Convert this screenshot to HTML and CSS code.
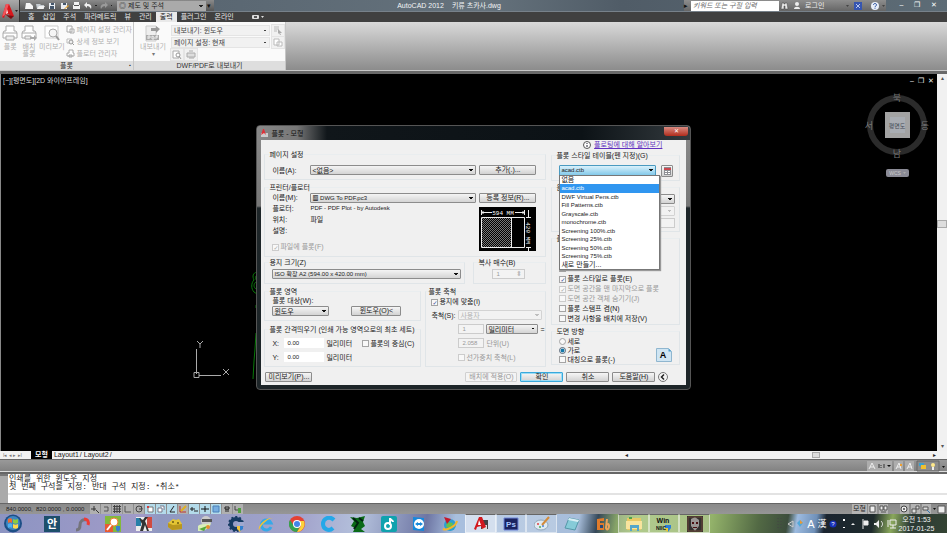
FILE: index.html
```html
<!DOCTYPE html>
<html lang="ko">
<head>
<meta charset="utf-8">
<title>AutoCAD 2012 키류 츠카사.dwg</title>
<link rel="stylesheet" href="styles.css">
</head>
<body>
<div class="app">
  <header class="top">
    <button class="app-button" aria-label="응용프로그램 메뉴">
      <svg width="20" height="21" viewBox="0 0 20 21"><path d="M2 16 6 3h3l5 12-4 1-1-3-4 1-1 3z" fill="#d8161b"/><path d="m6 3 3 0-4 11-3 2z" fill="#f0545a"/><path d="m7 8 1 4-2 1z" fill="#fff"/><path d="m6 14 8 1-3 3z" fill="#7c0d10"/><path d="M15 9h3l-1.500 2z" fill="#222"/></svg>
    </button>
    <div class="top-rows">
      <div class="titlebar">
        <div class="quick">
          <svg width="92" height="12" viewBox="0 0 92 12"><path d="M6 3h4l3 3v3H5z" fill="#f6f6f6"/><path d="M16 4h4l1 1h3v4h-7z" fill="#c5cbd0"/><path d="m17 9 2-3h6l-2 3z" fill="#f2f2f2"/><path d="M29 3h6v6h-6z" fill="#e9edf2"/><path d="M31 3h3v2h-3zM30 6h4v3h-4z" fill="#44566b"/><path d="M41 3h6v6h-6z" fill="#e9edf2"/><path d="M43 3h3v2h-3z" fill="#44566b"/><path d="m44 9 4-4 1 1-4 3z" fill="#e0a030"/><path d="M54 2h5v3h1v4h-7V5h1z" fill="#f2f2f2"/><path d="M54 5h5v1h-5z" fill="#555"/><path d="m64 5 3-3v2c4 0 5 2 4 5-1-2-2-3-4-3v2z" fill="#f0f0f0"/><path d="M75 5h2v1h-2zM91 5h1v1h-1z" fill="#222"/><path d="m88 5-3-3v2c-4 0-5 2-4 5 1-2 2-3 4-3v2z" fill="#9a9a9a"/></svg>
          <select class="workspace" aria-label="작업공간"><option>◎ 제도 및 주석</option></select>
          <span class="quick-more">▾</span>
        </div>
        <h1 class="title"><span>AutoCAD 2012</span><span>키류 츠카사.dwg</span></h1>
        <div class="info">
          <span class="info-arrow">▸</span>
          <input class="search" placeholder="키워드 또는 구절 입력" aria-label="검색">
          <svg width="24" height="12" viewBox="0 0 24 12"><path d="M3 3h2v1h1V3h2l1 6H6V6H5v3H2z" fill="#e6e6e6" stroke="#444" stroke-width=".5"/><circle cx="18" cy="4" r="2" fill="#eee"/><path d="M15 9c0-3 6-3 6 0z" fill="#eee"/></svg>
          <button class="login">로그인</button>
          <svg width="44" height="12" viewBox="0 0 44 12"><path d="M4 5h3L5.500 7zM40 5h3l-1.500 2z" fill="#444"/><path d="M12 2h8v8h-8z" fill="#3655b0"/><path d="m14 4 4 4m0-4-4 4" stroke="#b9c8f0"/><circle cx="33" cy="6" r="4" fill="#e9eef8"/><path d="M31.500 5c0-2 3-2 3 0 0 1-1.500 1-1.500 2m0 .7v1" fill="none" stroke="#224a9c"/></svg>
        </div>
        <div class="window-buttons"><button>‒</button><button>❐</button><button>✕</button></div>
      </div>
      <nav class="tabs">
        <a href="#">홈</a><a href="#">삽입</a><a href="#">주석</a><a href="#">파라메트릭</a><a href="#">뷰</a><a href="#">관리</a><a href="#" class="active">출력</a><a href="#">플러그인</a><a href="#">온라인</a>
        <svg class="tab-extra" width="13" height="6" viewBox="0 0 13 6"><rect width="7" height="4" y="1" rx="1" fill="#ddd"/><path d="M2 2h3v2H2z" fill="#555"/><path d="M9 2h3l-1.500 2z" fill="#ddd"/></svg>
      </nav>
    </div>
  </header>

  <section class="ribbon">
    <div class="panel panel-plot">
      <div class="panel-body">
        <button class="big"><svg width="18" height="17" viewBox="0 0 18 17"><path d="M5 1h8v5h2l1 2v5H2V8l1-2h2z" fill="#fff" stroke="#aaa"/><path d="M2 8h14M5 11h8v4H5z" fill="#eee" stroke="#aaa"/></svg>플롯</button>
        <button class="big"><svg width="18" height="17" viewBox="0 0 18 17"><path d="M5 1h8v5h2l1 2v5H2V8l1-2h2z" fill="#fff" stroke="#aaa"/><path d="M2 8h14M5 11h6v3H5z" fill="#eee" stroke="#aaa"/><path d="M10 12h4v-2l3 3-3 3v-2h-4z" fill="#aaa"/></svg>배치<br>플롯</button>
        <button class="big wide"><svg width="18" height="17" viewBox="0 0 18 17"><path d="M2 1h13v12H2z" fill="#fff" stroke="#ccc"/><circle cx="10" cy="8" r="4" fill="#f5f5f5" stroke="#aaa"/><path d="m13 11 3 4" stroke="#999" stroke-width="2"/></svg>미리보기</button>
        <div class="tools">
          <button><svg width="9" height="9" viewBox="0 0 9 9"><path d="M1 1h5v6H1zM4 4h4v4H4z" fill="#fff" stroke="#aaa"/></svg>페이지 설정 관리자</button>
          <button><svg width="9" height="9" viewBox="0 0 9 9"><path d="M1 2h5v4H1z" fill="#fff" stroke="#bbb"/><circle cx="5" cy="5" r="2" fill="#eee" stroke="#999"/><path d="m6 6 2 2" stroke="#999"/></svg>상세 정보 보기</button>
          <button><svg width="9" height="9" viewBox="0 0 9 9"><path d="M3 1h4v3h1v3H1V4h2zM3 6h3v2H3z" fill="#fff" stroke="#aaa"/></svg>플로터 관리자</button>
        </div>
      </div>
      <h2>플롯<i>▪</i></h2>
    </div>
    <div class="panel panel-export">
      <div class="panel-body">
        <button class="big export"><svg width="18" height="17" viewBox="0 0 18 17"><path d="M2 1h10v15H2z" fill="#eee" stroke="#ccc"/><path d="M7 3h5V1l4 3-4 4V6H7z" fill="#999"/><path d="M2 10h13v5H2z" fill="#aaa"/><path d="M4 14v-3h2v2H4m4 1v-3l2 1v2H8m4 0v-3h2m-2 1h2" fill="none" stroke="#eee"/></svg>내보내기<br><small>▾</small></button>
        <div class="export-fields">
          <div><select aria-label="내보내기"><option>내보내기: 윈도우</option></select><svg width="12" height="11" viewBox="0 0 12 11"><path d="M2 2h5M2 4h5M2 6h3" stroke="#bbb"/><path d="m6 4 4 4-2 0 1 2-1 0-1-2-1 1z" fill="#aaa"/></svg></div>
          <div><select aria-label="페이지 설정"><option>페이지 설정: 현재</option></select><svg width="12" height="11" viewBox="0 0 12 11"><path d="M2 2h5v6H2zM5 5h5v4H5z" fill="#fff" stroke="#bbb"/></svg></div>
          <div class="minis"><svg width="12" height="11" viewBox="0 0 12 11"><path d="M2 2h6v7H2z" fill="#fff" stroke="#aaa"/><circle cx="7" cy="6" r="2" fill="#fff" stroke="#999"/><path d="m8 7 2 3" stroke="#999"/></svg><svg width="12" height="11" viewBox="0 0 12 11"><path d="M2 4h8v4H2zM4 2h4M4 9h5" fill="#ddd" stroke="#aaa"/></svg></div>
        </div>
      </div>
      <h2>DWF/PDF로 내보내기</h2>
    </div>
  </section>

  <main class="workspace-area">
    <div class="drawing">
      <p class="view-label">[−][평면도][2D 와이어프레임]</p>
      <div class="doc-buttons"><button aria-label="최소화">‒</button><button aria-label="복원">❐</button><button aria-label="닫기">✕</button></div>
      <svg class="compass" width="70" height="110" viewBox="0 0 70 110">
        <circle cx="33" cy="33" r="27" fill="none" stroke="#2b2b2b" stroke-width="6"/>
        <path d="M21 20h25v26H21z" fill="#a3a3a3"/><path d="M26 25h15v16H26z" fill="#a9adb3"/>
        <text x="33" y="36" font-size="6" fill="#444b55">평면도</text>
        <text x="33" y="9">북</text><text x="5" y="37">서</text><text x="61" y="37">동</text><text x="33" y="65">남</text>
        <rect x="22" y="77" width="23" height="8" rx="2" fill="#8b8b96"/><text x="31" y="83" font-size="5" fill="#ccc">WCS</text><path d="M39 80h3l-1.500 2z" fill="#aaa"/>
      </svg>
      <svg class="ucs" width="42" height="40" viewBox="0 0 42 40" fill="none" stroke="#aaa"><path d="M4.500 9v25M7 35.500h22M2 32.500h5v5H2zM5 1l3 3 3-3M8 4v4M31 29l6 6m0-6-6 6"/></svg>
      <svg class="trace" width="8" height="112" viewBox="0 0 8 112" fill="none" stroke="#087808"><path d="M7 1C3 2 2 5 4 9c-3 3-3 9 0 12l3 2M7 4c-3 2-1 5 0 6-4 3-4 6 0 9M6 34v3M6 62 5 78 4 90 3 108"/></svg>
    </div>
    <div class="vscroll"><span>▴</span><i></i><span>▾</span></div>

    <section class="dialog" role="dialog" aria-label="플롯 - 모형">
      <header class="dialog-title"><svg width="9" height="8" viewBox="0 0 9 8"><path d="M1 4h7v4H1z" fill="#ccc"/><path d="m1 6 2-6h1l2 6-2-2z" fill="#e03038"/></svg><span>플롯 - 모형</span><button aria-label="닫기">✕</button></header>
      <form class="dialog-body">
        <div class="left">
          <fieldset><legend>페이지 설정</legend>
            <div class="named setup"><label for="ps">이름(A):</label><select id="ps"><option>&lt;없음&gt;</option></select><button type="button">추가(.)...</button></div>
          </fieldset>
          <fieldset><legend>프린터/플로터</legend>
            <div class="named printer">
              <label for="pr">이름(M):</label><select id="pr" class="latin"><option>▩ DWG To PDF.pc3</option></select><button type="button">등록 정보(R)...</button>
              <span>플로터:</span><span class="latin">PDF - PDF Plot - by Autodesk</span>
              <span>위치:</span><span>파일</span>
              <span>설명:</span><span></span>
              <label class="tofile off"><input type="checkbox" checked disabled>파일에 플롯(F)</label>
              <svg class="preview" width="57" height="44" viewBox="0 0 57 44"><defs><pattern id="hatch" width="2" height="2" patternUnits="userSpaceOnUse"><path d="M0 0h1v1H0zM1 1h1v1H1z" fill="#777"/></pattern></defs><path d="M0 0h57v44H0z" fill="#000"/><path d="M3 11h29v29H3z" fill="url(#hatch)"/><path d="M2.500 10.500h43v30h-43zM32.500 11v29M2.500 3v5M45.500 3v5M3 5.500h10M36 5.500h9M4 4v3M44 4v3M47 10.500h5M47 40.500h5M49.500 3v8M49.500 40v4" fill="none" stroke="#eee"/><text x="24" y="8">594 MM</text><text transform="translate(47 26) rotate(90)" x="0" y="0">420 MM</text></svg>
            </div>
          </fieldset>
          <div class="paper">
            <fieldset><legend>용지 크기(Z)</legend><select class="full latin" aria-label="용지 크기"><option>ISO 확장 A2 (594.00 x 420.00 mm)</option></select></fieldset>
            <fieldset class="copies"><legend>복사 매수(B)</legend><span class="spin"><input value="1" disabled aria-label="복사 매수"><i>⬍</i></span></fieldset>
          </div>
          <div class="area-scale">
            <div class="area">
              <fieldset><legend>플롯 영역</legend><label class="line" for="what">플롯 대상(W):</label>
                <div class="what"><select id="what"><option>윈도우</option></select><button type="button">윈도우(O)&lt;</button></div></fieldset>
              <fieldset class="offset"><legend>플롯 간격띄우기 (인쇄 가능 영역으로의 최초 세트)</legend>
                <div class="xy"><label for="ox">X:</label><input id="ox" value="0.00"><span>밀리미터</span><label><input type="checkbox">플롯의 중심(C)</label></div>
                <div class="xy"><label for="oy">Y:</label><input id="oy" value="0.00"><span>밀리미터</span></div></fieldset>
            </div>
            <fieldset class="scale"><legend>플롯 축척</legend>
              <label class="fit"><input type="checkbox" checked>용지에 맞춤(I)</label>
              <div class="scale-row"><label for="sc">축척(S):</label><select id="sc" disabled><option>사용자</option></select></div>
              <div class="scale-row units"><span></span><input value="1" disabled aria-label="용지 단위"><select aria-label="단위"><option>밀리미터</option></select><span>=</span></div>
              <div class="scale-row units"><span></span><input value="2.058" disabled aria-label="도면 단위"><span class="off">단위(U)</span></div>
              <div class="scale-row"><span></span><label class="off"><input type="checkbox" disabled>선가중치 축척(L)</label></div>
            </fieldset>
          </div>
        </div>
        <div class="right">
          <div class="learn"><svg width="8" height="8" viewBox="0 0 8 8"><circle cx="4" cy="4" r="3.500" fill="#fff" stroke="#555"/><path d="M4 2v1M4 4v2" stroke="#223"/></svg><a href="#">플로팅에 대해 알아보기</a></div>
          <fieldset><legend>플롯 스타일 테이블(펜 지정)(G)</legend>
            <div class="table-row">
              <select class="hot latin" aria-label="플롯 스타일 테이블"><option>acad.ctb</option></select>
              <button type="button" aria-label="편집"><svg width="7" height="8" viewBox="0 0 7 8"><path d="M0 0h7v8H0z" fill="#8d8f93"/><path d="M0 1h7v2H0z" fill="#c9474f"/><path d="M1 4h2v1H1zM4 4h2v1H4zM1 6h2v1H1zM4 6h2v1H4z" fill="#fff"/></svg></button>
              <ul class="list" role="listbox"><li class="ko">없음</li><li class="sel">acad.ctb</li><li>DWF Virtual Pens.ctb</li><li>Fill Patterns.ctb</li><li>Grayscale.ctb</li><li>monochrome.ctb</li><li>Screening 100%.ctb</li><li>Screening 25%.ctb</li><li>Screening 50%.ctb</li><li>Screening 75%.ctb</li><li class="ko">새로 만들기...</li></ul>
            </div>
          </fieldset>
          <fieldset class="shade"><legend>음영</legend>
            <select aria-label="음영 플롯"></select><select disabled aria-label="품질"></select><input disabled aria-label="DPI">
          </fieldset>
          <fieldset class="options"><legend>플롯</legend>
            <label><input type="checkbox" aria-label="백그라운드에 플롯">&nbsp;</label>
            <label class="off"><input type="checkbox" disabled aria-label="객체의 선가중치 플롯">&nbsp;</label>
            <label><input type="checkbox" aria-label="플롯 투명도">&nbsp;</label>
            <label><input type="checkbox" checked>플롯 스타일로 플롯(E)</label>
            <label class="off"><input type="checkbox" checked disabled>도면 공간을 맨 마지막으로 플롯</label>
            <label class="off"><input type="checkbox" disabled>도면 공간 객체 숨기기(J)</label>
            <label><input type="checkbox">플롯 스탬프 켬(N)</label>
            <label><input type="checkbox">변경 사항을 배치에 저장(V)</label>
          </fieldset>
          <fieldset class="orient"><legend>도면 방향</legend>
            <div><label><input type="radio" name="o">세로</label><label><input type="radio" name="o" checked>가로</label><label><input type="checkbox">대칭으로 플롯(-)</label></div>
            <svg width="16" height="14" viewBox="0 0 16 14"><path d="M.5.5h12l3 3v10H.5z" fill="#cfe5f3" stroke="#8fb6cf"/><path d="M12.500.5v3h3z" fill="#4fa0cf"/><text x="7" y="10">A</text></svg>
          </fieldset>
        </div>
        <footer class="actions">
          <button type="button" class="pre">미리보기(P)...</button>
          <button type="button" class="apply" disabled>배치에 적용(O)</button>
          <button type="button" class="ok">확인</button><button type="button">취소</button><button type="button">도움말(H)</button>
          <button type="button" class="less" aria-label="축소"><svg width="10" height="10" viewBox="0 0 10 10"><circle cx="5" cy="5" r="4.500" fill="#f4f4f4" stroke="#777"/><path d="M6 2.500 3.500 5 6 7.500" fill="none" stroke="#222" stroke-width="1.500"/></svg></button>
        </footer>
      </form>
    </section>
  </main>

  <div class="layouts">
    <span class="pager">I◂ ◂ ▸ ▸I</span><a href="#" class="current">모형</a><a href="#">Layout1</a><b>/</b><a href="#">Layout2</a><b>/</b>
    <div class="hscroll"><span>◂</span><i></i><span>▸</span></div>
  </div>
  <div class="anno">
    <svg width="80" height="12" viewBox="0 0 80 12"><path d="M0 1h25v10H0zM27 1h9v10h-9zM38 1h9v10h-9z" fill="#adadad"/><path d="M50 1h22v10H50z" fill="#8c8c8c" stroke="#666"/><path d="m2 9 3-6 3 6M3 7h4M29 9l3-6 2 6M30 7h4M40 9l3-6 2 6M41 7h4" fill="none" stroke="#eee"/><path d="M12 4v4M17 4v4M14 5v1M14 7v1" stroke="#333"/><path d="M20 5h4l-2 2zM75 6h3l-1.500 2z" fill="#111"/><path d="M33 4h2v2h-2z" fill="#f0a030"/><path d="M52 3h5v3h-5z" fill="#3aa0d0"/><path d="M54 5h5v4h-5z" fill="#f0c030"/><circle cx="66" cy="5" r="2" fill="#ffe98a"/><path d="M65 7h2v3h-2z" fill="#eee"/></svg>
  </div>
  <section class="command">
    <div class="grip"></div>
    <div class="command-text"><p>인쇄를 위한 윈도우 지정</p><p>첫 번째 구석을 지정: 반대 구석 지정: *취소*</p><input aria-label="명령"></div>
  </section>
  <div class="status">
    <output class="coords">840.0000, &nbsp;820.0000 , 0.0000</output>
    <div class="toggles">
      <button><svg viewBox="0 0 10 10"><path d="M1 5h5M4 2v5M6 6l3 3" stroke="#333"/></svg></button><button><svg viewBox="0 0 10 10"><path d="M3 7h4V3H3" stroke="#555"/></svg></button><button><svg viewBox="0 0 10 10"><path d="M1 2.500h8M1 5h8M1 7.500h8M2.500 1v8M5 1v8M7.500 1v8" stroke="#444"/></svg></button><button><svg viewBox="0 0 10 10"><path d="M2 2v6h6" stroke="#555"/></svg></button><button><svg viewBox="0 0 10 10"><circle cx="5" cy="5" r="3" stroke="#444"/><path d="M5 5h3L7 2" stroke="#444"/></svg></button><button class="on"><svg viewBox="0 0 10 10"><path d="M3 3h5v5H3z" fill="#fff" stroke="#777"/><path d="M2 2h2v2H2z" fill="#d04040"/></svg></button><button class="on"><svg viewBox="0 0 10 10"><path d="M2 4h4v4H2zM4 2h4v4" fill="#fff" stroke="#778"/></svg></button><button class="on"><svg viewBox="0 0 10 10"><path d="M7 2 3 8h5" stroke="#222"/></svg></button><button><svg viewBox="0 0 10 10"><path d="M2 2v6h6" stroke="#c03030"/><path d="m3 7 5-5" stroke="#e0b020" stroke-width="2"/></svg></button><button class="on"><svg viewBox="0 0 10 10"><path d="M1 5h5M3 3v4M5 7h4" stroke="#222"/></svg></button><button class="on"><svg viewBox="0 0 10 10"><path d="M1 5h8M5 2v6" stroke="#111"/></svg></button><button class="on"><svg viewBox="0 0 10 10"><path d="M2 2h6v6H2z" fill="#78aee0" stroke="#4a80b8"/></svg></button><button><svg viewBox="0 0 10 10"><path d="M3 3h4v2H3zM4 5v3M6 5v3" stroke="#222"/></svg></button><button><svg viewBox="0 0 10 10"><path d="M2 2v4h3" stroke="#444"/><path d="M5 4h3v5H5z" fill="#50a040"/></svg></button>
    </div>
    <div class="status-right"><button class="model">모형</button><svg width="80" height="10" viewBox="0 0 80 10"><path d="M1 0h9v10H1zM12 0h9v10h-9zM33 0h9v10h-9zM44 0h9v10h-9zM55 0h9v10h-9z" fill="#b4b4b4"/><path d="M3 2h5v6H3zM13 2h3v4h-3zM17 2h3v4h-3zM14 8h5M71 2h7v7h-7z" fill="#eee" stroke="#555"/><circle cx="37" cy="5" r="3" fill="#eee" stroke="#444"/><circle cx="37" cy="5" r="1" fill="#444"/><path d="M45 5h4v4h-4zM49 2h3v3h-3zM56 3h5v3h-5z" fill="#ddd" stroke="#555"/><path d="m60 6 3 3" stroke="#3575b0"/><path d="M66 4h3l-1.500 2z" fill="#111"/></svg></div>
  </div>

  <footer class="taskbar">
    <button class="start" aria-label="시작"><svg width="20" height="19" viewBox="0 0 20 19"><circle cx="10" cy="9.500" r="9" fill="#1d4f86"/><circle cx="10" cy="9" r="7" fill="#3f86c0"/><path d="M5 5c2-1 3-1 4 0v4c-1-1-3-1-4 0z" fill="#f06a30"/><path d="M10 5c2 1 3 1 5 0v4c-2 1-3 1-5 0z" fill="#8ccc40"/><path d="M5 10c2-1 3-1 4 0v4c-1-1-3-1-4 0z" fill="#50b0f0"/><path d="M10 10c2 1 3 1 5 0v4c-2 1-3 1-5 0z" fill="#ffd84a"/></svg></button>
    <div class="apps">
      <button><svg viewBox="0 0 16 16"><path d="M0 0h16v16H0z" fill="#1d4f6b"/><text x="8" y="12" font-size="11" fill="#fff">안</text></svg></button>
      <button><svg viewBox="0 0 16 16" fill="none" stroke-width="3"><path d="M1 14c3 0 4-2 4-5 0-4 3-6 6-5" stroke="#74747c"/><path d="M9 3c4 0 5 3 4 6" stroke="#ee3b35"/></svg></button>
      <button><svg viewBox="0 0 16 16"><path d="M0 0h16v16H0z" fill="#83b93c"/><path d="M0 8h8v8H0z" fill="#e85a32"/><circle cx="9" cy="6" r="4" fill="#fff" stroke="#f08030"/><path d="m6 9-4 5" stroke="#fff" stroke-width="2"/><path d="M11 10h4v4l-2 2-2-2z" fill="#3b80d0"/></svg></button>
      <button><svg viewBox="0 0 16 16"><path d="M0 1h16v14H0z" fill="#ececec"/><path d="M0 2h5v8H0z" fill="#277fa8"/><path d="M11 1h5v11h-5z" fill="#d04a40"/><path d="m3 2 3 6-2 7h3l2-6 2 6h2L9 5l3-4H9L7 4z" fill="#333"/></svg></button>
      <button><svg viewBox="0 0 16 16"><path d="m1 7 5-4 3 1 3-1 3 5v5l-10 1-4-3z" fill="#e4c534"/><path d="m1 7 5 2 9-1v5l-10 1-4-3z" fill="#b9971e"/><circle cx="6" cy="6" r="1" fill="#6e5b12"/><circle cx="11" cy="7" r="1" fill="#6e5b12"/></svg></button>
      <button><svg viewBox="0 0 16 16"><circle cx="9" cy="5" r="5" fill="#ccc"/><path d="M5 3h10v3H5z" fill="#555"/><path d="M1 10c3-3 8-1 13-3-1 6-7 8-13 8z" fill="#d9efb8"/><path d="m2 13 8-3-3 5z" fill="#56a83a"/><circle cx="11" cy="11" r="2" fill="#e69030"/></svg></button>
      <button><svg viewBox="0 0 16 16" fill="none"><circle cx="8" cy="8" r="5" stroke="#173b63" stroke-width="4"/><circle cx="8" cy="8" r="7" stroke="#173b63" stroke-width="2" stroke-dasharray="2 2"/><path d="M9 6h7v4H9z" fill="#9fa8cf"/><path d="M9 10h5v3l-2 3-3-3z" fill="#f2c43c"/><path d="M12 10h3v3l-3 2z" fill="#3080d0"/></svg></button>
      <button><svg viewBox="0 0 16 16" fill="none"><path d="M13 11a5 5 0 1 1 0-4H5" stroke="#36a9e8" stroke-width="3"/><path d="M1 14C-1 10 8 1 15 2c-5 0-12 7-14 12z" fill="#f2c334"/></svg></button>
      <button><svg viewBox="0 0 16 16"><circle cx="8" cy="8" r="8" fill="#e44134"/><path d="M1 4a8 8 0 0 0 7 12l3-6H5z" fill="#34a350"/><path d="M8 16a8 8 0 0 0 7-11H9l3 5z" fill="#fbd23c"/><circle cx="8" cy="8" r="4" fill="#fff"/><circle cx="8" cy="8" r="3" fill="#4285e8"/></svg></button>
      <button><svg viewBox="0 0 16 16" fill="none"><path d="M14 4C9-1 3 3 3 8s6 8 10 4" stroke="#25a8e8" stroke-width="4"/></svg></button>
      <button><svg viewBox="0 0 16 16"><path d="m0 1 7 1 8-2-2 6 2 4-4 3 4 3H3l2-4-4-2 3-5z" fill="#0a6a18"/><path d="m3 2 5 5-4 6m5-11 4 3" stroke="#021" stroke-width="2" fill="none"/></svg></button>
      <button><svg viewBox="0 0 16 16"><rect width="16" height="16" rx="2" fill="#10a2ae"/><circle cx="7" cy="10" r="3" fill="none" stroke="#fff" stroke-width="2"/><path d="M9 9V2c0 2 3 2 3 4" fill="none" stroke="#fff" stroke-width="2"/></svg></button>
      <button><svg viewBox="0 0 16 16"><path d="m2 1 11 1v13L2 14z" fill="#1688dc"/><circle cx="8" cy="8" r="5" fill="#fff"/><path d="m4 8 3-2v1h2V6l3 2-3 2V9H7v1z" fill="#1688dc"/></svg></button>
      <button><svg viewBox="0 0 16 16"><circle cx="8" cy="9" r="6" fill="#2b9fd2"/><path d="m5 6 6 1-2 6-5-2z" fill="#67c04b"/><path d="M1 13c4 2 13-3 14-8" stroke="#f3b62b" stroke-width="2" fill="none"/><path d="m2 1 7 2-4 5z" fill="#c5182b"/></svg></button>
      <button class="open active"><svg viewBox="0 0 16 16"><path d="M8 4h7v9H8z" fill="#444"/><path d="M9 9h5v5H9z" fill="#ddd"/><path d="m1 13 5-12h3l4 10-4 2-1-3-4 1-1 3z" fill="#d2181d"/><path d="m6 4 2 5H5z" fill="#fff"/></svg></button>
      <button class="open"><svg viewBox="0 0 16 16"><path d="M1 2h14v12H1z" fill="#1b2360" stroke="#6f86d8"/><text x="8" y="11" font-size="8" fill="#a9c7ff">Ps</text></svg></button>
      <button class="open"><svg viewBox="0 0 16 16"><ellipse cx="7" cy="9" rx="7" ry="5" fill="#dfeaf2" stroke="#90a8ba"/><circle cx="4" cy="8" r="1" fill="#e04040"/><circle cx="6" cy="11" r="1" fill="#50b050"/><circle cx="9" cy="10" r="1" fill="#4080e0"/><path d="m8 9 7-8" stroke="#d28b3c" stroke-width="2"/></svg></button>
      <button><svg viewBox="0 0 16 16"><path d="m5 2 10 2-4 10-10-2z" fill="#86cbd8" stroke="#5598a8"/><path d="m5 2 10 2-1 2-10-2z" fill="#d8eef4"/></svg></button>
      <button><svg viewBox="0 0 16 16"><path d="m2 3 7-1v3H5v2h4v7H2z" fill="#df7b2b"/><path d="M5 9h3v3H5z" fill="#264a78"/><path d="m12 3-1 9c1 3 3 1 3-2s-2-2-3 0" stroke="#eaa45c" stroke-width="2" fill="none"/></svg></button>
      <button class="open"><svg viewBox="0 0 16 16"><path d="M1 2h14v12H1z" fill="#e9c965"/><path d="M0 5h16v8H0z" fill="#f8e49d"/><path d="M4 9h9v6h-2v-3H6v3H4z" fill="#55a6ca"/><path d="M3 1h3v2H3z" fill="#52a34b"/></svg></button>
      <button class="open"><svg viewBox="0 0 16 16"><path d="M9 9h6v3l-3 4-3-3z" fill="#2e80d4"/><path d="M9 12h3v4l-3-2z" fill="#f2c92e"/><text x="7" y="7" font-size="7" fill="#111">Win</text><text x="5" y="14" font-size="5" fill="#111">NIIC</text></svg></button>
      <button class="open"><svg viewBox="0 0 16 16"><path d="M0 0h16v16H0z" fill="#33302f"/><path d="m4 3 4-2 4 3v6l-4 5-4-5z" fill="#9a9694"/><path d="M5 6h2v2H5zM9 6h2v2H9zM6 11h4v1H6z" fill="#4b1012"/><path d="M1 1h14v14H1z" fill="none" stroke="#6e4a3a"/></svg></button>
    </div>
    <div class="tray">
      <svg width="110" height="18" viewBox="0 0 110 18"><path d="M2 3v12M5 3v12" stroke="#444" stroke-dasharray="1 2"/><path d="m17 6-5 3 5 3z" fill="none" stroke="#ccc"/><path d="m21 8 3-3 3 3-3 4z" fill="#52a9d9"/><path d="m24 5 3 3-3 1z" fill="#e99a36"/><text x="35" y="13">A</text><text x="46" y="12" font-size="9">漢</text><circle cx="57" cy="9" r="3.500" fill="#1731b8"/><text x="57" y="11" font-size="6">?</text><path d="M67 4h2v2h-2zM67 12h2v1h-2z" fill="#fff"/><path d="m75 10 2-2 2 2z" fill="#eee"/><path d="M87 4v10M88 6h4v4h-4z" stroke="#eee" fill="#eee"/><path d="M98 8h2l3-3v8l-3-3h-2z" fill="#eee"/><path d="M105 6c2 2 2 4 0 6" stroke="#eee" fill="none"/></svg>
      <svg width="12" height="18" viewBox="0 0 12 18"><path d="M4 5h6v5H4zM7 10v3M4 13h6M2 5v7" stroke="#eee" fill="none"/></svg>
      <time>오전 1:53<br>2017-01-25</time>
    </div>
  </footer>
</div>
</body>
</html>
```
FILE: styles.css
```css
* { box-sizing: border-box; }
html, body { margin: 0; height: 100%; }
body { font: 7px/9px "Liberation Sans", "Noto Sans CJK KR", sans-serif; color: #222; overflow: hidden; }
button, input, select { font: inherit; color: inherit; margin: 0; padding: 0; border: 0; background: none; border-radius: 0; min-width: 0; }
button { white-space: nowrap; }
select { appearance: none; }
h1, h2, p, ul { margin: 0; padding: 0; font: inherit; }
a { color: inherit; text-decoration: none; }
i { font-style: normal; }
svg { display: block; flex: none; }
.app { display: flex; flex-direction: column; height: 100vh; background: #000; }

/* Title bar and tabs */
.top { display: flex; flex: none; background: #404040; }
.app-button { width: 20px; background: linear-gradient(#aaa, #666); border-right: 1px solid #333; }
.top-rows { flex: 1; min-width: 0; }
.titlebar { display: flex; height: 12px; background: linear-gradient(90deg, #525f6b, #65727c 50%, #505c67 65%, #5d6c76); border-bottom: 1px solid #77818a; }
.quick { display: flex; align-items: center; gap: 5px; width: 194px; background: linear-gradient(#8a8a8a, #555); }
.workspace { flex: 1; height: 10px; padding-left: 2px; background: linear-gradient(45deg, transparent 50%, #222 50%) right 5px top 4px / 2px 2px no-repeat, linear-gradient(-45deg, transparent 50%, #222 50%) right 3px top 4px / 2px 2px no-repeat, #aaa; }
.quick-more { width: 7px; margin-left: -4px; color: #111; }
.title { flex: 1; display: flex; justify-content: center; gap: 8px; line-height: 12px; color: #f2f4f6; white-space: nowrap; }
.info { display: flex; align-items: center; width: 202px; background: linear-gradient(#8d8d8d, #666); color: #eee; }
.info-arrow { width: 7px; color: #111; }
.search { width: 88px; height: 10px; padding: 0 2px; background: #fff; font-style: italic; }
.search::placeholder { color: #666; }
.login { flex: 1; text-align: left; padding-left: 2px; }
.window-buttons { display: flex; justify-content: space-around; width: 61px; padding: 0 4px 2px 8px; color: #fff; }
.tabs { display: flex; align-items: center; height: 10px; padding-left: 4px; color: #e8e8e8; }
.tabs a { padding: 0 4px; line-height: 10px; }
.tabs .active { background: #e9e9e9; color: #222; }
.tab-extra { margin-left: 14px; }

/* Ribbon */
.ribbon { display: flex; flex: none; height: 52px; background: linear-gradient(#d9d9d9, #8c8c8c 48px); border-bottom: 3px solid #6a6a6a; box-shadow: inset 0 -1px #c8c8c8; }
.panel { display: flex; flex-direction: column; height: 48px; background: #fafafa; border-right: 1px solid #c6c6c6; }
.panel-plot { width: 134px; }
.panel-export { width: 152px; }
.panel-body { display: flex; flex: 1; padding: 3px 1px 0; color: #b0b0b0; }
.panel h2 { display: flex; justify-content: center; background: #dedede; color: #333; position: relative; }
.panel h2 i { position: absolute; right: 2px; font-size: 5px; }
.big { display: flex; flex-direction: column; align-items: center; width: 19px; line-height: 7px; gap: 1px; white-space: normal; }
.big br { display: none; }
.big.wide { width: 28px; }
.big.export { width: 36px; }
.big small { font-size: 6px; color: #777; }
.tools { display: flex; flex-direction: column; gap: 3px; }
.tools button { display: flex; gap: 2px; }
.export-fields { display: flex; flex: 1; flex-direction: column; gap: 1px; color: #444; }
.export-fields div { display: flex; gap: 2px; }
.export-fields select { flex: 1; height: 11px; padding-left: 2px; border: 1px solid #e4e4e4; background: linear-gradient(45deg, transparent 50%, #444 50%) right 4px top 4px / 2px 2px no-repeat, linear-gradient(-45deg, transparent 50%, #444 50%) right 2px top 4px / 2px 2px no-repeat, #f1f1f1; }
.export-fields svg { background: #f1f1f1; outline: 1px solid #e4e4e4; }

/* Drawing area */
.workspace-area { flex: 1; min-height: 0; display: flex; position: relative; border-left: 1px solid #888; }
.drawing { flex: 1; position: relative; }
.view-label { padding: 2px; color: #ddd; }
.doc-buttons { position: absolute; right: 3px; top: 2px; display: flex; gap: 4px; color: #eee; }
.compass { position: absolute; right: 3px; top: 18px; font-size: 9px; fill: #777; text-anchor: middle; }
.ucs { position: absolute; left: 191px; top: 266px; }
.trace { position: absolute; left: 249px; top: 197px; }
.vscroll { width: 10px; background: #f1f1f1; display: flex; flex-direction: column; justify-content: space-between; text-align: center; color: #555; font-size: 6px; }
.vscroll i { height: 8px; margin-bottom: 78px; border: 1px solid #aaa; background: #ddd; }

/* Plot dialog */
.dialog { position: absolute; left: 27%; top: 51px; width: 435px; padding: 0 4px 4px; background: linear-gradient(#8a8a8a, #777 80px, #1d2528 82px); border: 1px solid #555; border-radius: 4px; }
.dialog-title { display: flex; gap: 2px; height: 14px; align-items: center; margin: 0 -4px; padding-left: 3px; border-radius: 4px 4px 0 0; background: linear-gradient(90deg, #888 0, #777 40px, #10161a 70px, #0c1216 75%, #333a3e); color: #111; }
.dialog-title button { width: 24px; height: 9px; margin: 0 2px 4px auto; border-radius: 0 0 3px 3px; background: linear-gradient(#d98a80, #b02c1c); color: #fff; font-size: 6px; line-height: 8px; }
.dialog-body { display: grid; grid-template-columns: 1fr 129px; column-gap: 5px; padding: 5px 6px 3px 3px; background: #f0f0f0; }
.left { display: flex; flex-direction: column; gap: 3px; padding-top: 5px; }
fieldset { min-width: 0; margin: 0; padding: 0 7px 4px; border: 1px solid #e0e5e8; border-top-color: #e9edef; }
legend { padding: 0; margin-left: -3px; line-height: 9px; white-space: nowrap; }
label, .dialog span { white-space: nowrap; }
.latin, .list { font-size: 6px; }
.off, .dialog :disabled { color: #999; }
.dialog select, .actions button, .named button, .what button, .table-row button { height: 10px; border: 1px solid #8c8c8c; border-radius: 1px; }
.dialog select { width: 100%; padding: 0 8px 0 1px; background: linear-gradient(45deg, transparent 50%, #111 50%) right 4px top 3px / 2px 2px no-repeat, linear-gradient(-45deg, transparent 50%, #111 50%) right 2px top 3px / 2px 2px no-repeat, linear-gradient(#f4f4f4, #d4d4d4); }
.dialog select:disabled { border-color: #c8c8c8; background: linear-gradient(45deg, transparent 50%, #aaa 50%) right 4px top 3px / 2px 2px no-repeat, linear-gradient(-45deg, transparent 50%, #aaa 50%) right 2px top 3px / 2px 2px no-repeat, #f3f3f3; }
.actions button, .named button, .what button, .table-row button { line-height: 8px; background: linear-gradient(#f6f6f6, #d2d2d2); }
.dialog input:not([type]) { height: 10px; padding: 0 3px; background: #fff; width: 100%; font-size: 6px; }
.dialog input:disabled:not([type]) { background: #f3f3f3; border: 1px solid #ccc; }
input[type=checkbox], input[type=radio] { appearance: none; flex: none; width: 7px; height: 7px; margin-right: 1px; border: 1px solid #a4a4a4; background: #f8f8f8; vertical-align: -1px; }
input[type=checkbox]:checked::after { content: "✓"; display: block; font: bold 6px/5px "DejaVu Sans", sans-serif; color: #33489c; }
input[type=checkbox]:disabled { border-color: #ccc; }
input[type=checkbox]:disabled:checked::after { color: #aaa; }
input[type=radio] { border-radius: 50%; }
input[type=radio]:checked { background: radial-gradient(#1678a8 50%, #e0eef5 60%); border-color: #567; }
.named { display: grid; grid-template-columns: 35px 1fr 57px; column-gap: 3px; align-items: center; }
.setup { padding: 6px 2px 0 0; }
.printer { padding: 0 2px 1px 0; grid-template-rows: repeat(4, 11px) 15px; }
.printer > span:nth-of-type(even) { grid-column: 2; }
.printer > span:nth-of-type(odd) { grid-column: 1; }
.printer .tofile { grid-column: 1 / 3; grid-row: 5; align-self: end; }
.printer .preview { grid-column: 3; grid-row: 2 / 6; align-self: end; }
.preview text { font: 6px "Liberation Mono", monospace; fill: #fff; text-anchor: middle; }
.paper { display: grid; grid-template-columns: 201px 1fr; gap: 8px; margin-top: -2px; }
.paper fieldset { padding: 2px 3px 4px 7px; }
.copies .spin { display: flex; width: 33px; margin-left: 11px; }
.spin i { width: 9px; margin-left: -9px; color: #bbb; }
.area-scale { display: grid; grid-template-columns: 157px 1fr; gap: 4px; }
.area { display: flex; flex-direction: column; justify-content: space-between; }
.area .line { display: block; }
.what { display: flex; justify-content: space-between; padding: 1px 12px 0 0; }
.what select { width: 57px; }
.what button { width: 50px; }
.offset { padding-right: 0; }
.xy { display: grid; grid-template-columns: 10px 40px 34px 1fr; column-gap: 2px; padding-top: 4px; align-items: center; }
.scale { padding: 0 3px 4px 5px; display: flex; flex-direction: column; }
.fit { display: block; padding-top: 1px; }
.scale-row { display: grid; grid-template-columns: 25px 1fr; gap: 2px; align-items: center; margin-top: 4px; min-height: 10px; }
.scale-row.units { grid-template-columns: 25px 26px 52px 1fr; }
.right { display: flex; flex-direction: column; gap: 2px; }
.learn { display: flex; justify-content: flex-end; gap: 3px; height: 8px; padding-right: 18px; margin: -4px 0 0; color: #6230c0; }
.learn a { text-decoration: underline; line-height: 8px; }
.table-row { display: grid; grid-template-columns: 1fr 12px; gap: 5px; position: relative; padding: 5px 0 0; margin-right: -1px; }
.table-row .hot { height: 11px; border-color: #4a9ac0; background-image: linear-gradient(45deg, transparent 50%, #111 50%), linear-gradient(-45deg, transparent 50%, #111 50%), linear-gradient(#d9f1fb, #83c9ea); }
.table-row button { height: 12px; display: grid; place-items: center; }
.table-row { margin-bottom: -1px; }
.list { position: absolute; z-index: 2; left: 0; top: 15px; width: 101px; height: 95px; display: grid; grid-auto-rows: 1fr; list-style: none; background: #fff; border: 1px solid #777; box-shadow: 1px 1px 1px #999; line-height: 8px; }
.list li { padding-left: 1px; min-height: 0; }
.list .ko { font-size: 7px; }
.list .sel { background: #3096f0; color: #fff; }
.shade { display: grid; row-gap: 2px; padding: 2px 4px 3px 40px; }
.shade legend { margin-left: -36px; }
.options { display: flex; flex-direction: column; gap: 1px; padding-top: 1px; padding-bottom: 1px; }
.orient { padding-top: 1px; padding-bottom: 0; }
.orient label { display: block; }
.orient svg { float: right; margin: -16px 0 0 0; }
.orient svg text { font: bold 9px "Liberation Sans", sans-serif; text-anchor: middle; }
.actions { grid-column: 1 / 3; display: grid; grid-template-columns: 47px 1fr 52px 43px 43px 43px 10px; column-gap: 3px; padding: 5px 12px 0 1px; }
.actions .apply { grid-column: 3; border-color: #d0d0d0; background: #f4f4f4; }
.actions .ok { border: 1px solid #39a9dc; box-shadow: inset 0 0 0 1px #9bdcf5; }
.actions .less { border: 0; background: none; }

/* Layout tabs, command line, status */
.layouts { display: flex; align-items: center; flex: none; height: 8px; background: #f2f2f2; line-height: 8px; }
.pager { width: 31px; padding-left: 3px; font-size: 5px; color: #777; }
.layouts .current { background: #000; color: #fff; padding: 0 4px; margin-right: 2px; font-weight: bold; }
.layouts b { margin: 0 2px 0 1px; font-weight: normal; }
.hscroll { flex: 1; display: flex; justify-content: space-between; align-items: center; margin-left: 54%; padding-right: 11px; font-size: 6px; }
.hscroll i { width: 8px; height: 6px; margin-left: 70px; background: #ddd; border: 1px solid #aaa; }
.anno { display: flex; flex: none; justify-content: flex-end; height: 15px; background: linear-gradient(#999, #808080); border-top: 1px solid #666; border-bottom: 2px solid #666; box-shadow: inset 0 -1px #ddd; }
.command { display: flex; flex: none; height: 29px; background: #fff; }
.grip { width: 8px; background: #aaa; border-top: 2px solid #777; }
.command-text { flex: 1; padding-top: 1px; font: 8px/8px "Liberation Mono", "Noto Sans CJK KR", monospace; }
.command-text p { padding-left: 1px; }
.command-text input { display: block; width: 100%; height: 10px; margin-top: 2px; border-top: 2px solid #e3e3e3; }
.status { display: flex; flex: none; align-items: center; height: 11px; background: linear-gradient(#8a8a8a, #969696); border-top: 1px solid #666; }
.coords { width: 90px; padding-left: 6px; font-size: 6px; white-space: nowrap; }
.toggles { display: flex; gap: 1px; }
.toggles button { width: 10px; height: 10px; background: #b0b0b0; }
.toggles .on { background: #b4dbea; }
.toggles svg { width: 10px; height: 10px; fill: none; }
.status-right { display: flex; margin-left: auto; }
.model { padding: 0 1px; background: #b4b4b4; line-height: 10px; }

/* Taskbar */
.taskbar { display: flex; flex: none; height: 19px; background: linear-gradient(100deg, #8c94c2 0, #a19bc8 15%, #8f98c0 17%, #a3a4cc 32%, #b4c1dc 38%, #6e76a4 45%, #a8bfde 48%, #a8bedb 61%, #354859 63%, #86a368 65%, #9fbf72 67%, #93b26a 75%, #526944 80%, #3c4d3c 83%, #9dbbe0 84%, #6f90b8 86%, #1b2530 87%, #1e2a2c 92%, #8aa85c 94%, #2b3936 96%, #344433 100%); }
.start { width: 37px; padding-left: 3px; }
.apps { flex: 1; display: grid; grid-template-columns: repeat(22, 1fr); }
.apps button { display: grid; place-items: center; }
.apps svg { width: 16px; height: 16px; text-anchor: middle; font-weight: bold; }
.apps .open { border: 1px solid #ffffff80; border-top-color: #666; background: #ffffff30; }
.apps .active { background: #ffffff80; }
.tray { display: flex; align-items: center; width: 237px; padding-left: 66px; color: #f4f4f4; }
.tray svg { fill: #fff; font-size: 11px; text-anchor: middle; }
.tray time { flex: 1; padding-right: 12px; text-align: center; white-space: nowrap; }
```
